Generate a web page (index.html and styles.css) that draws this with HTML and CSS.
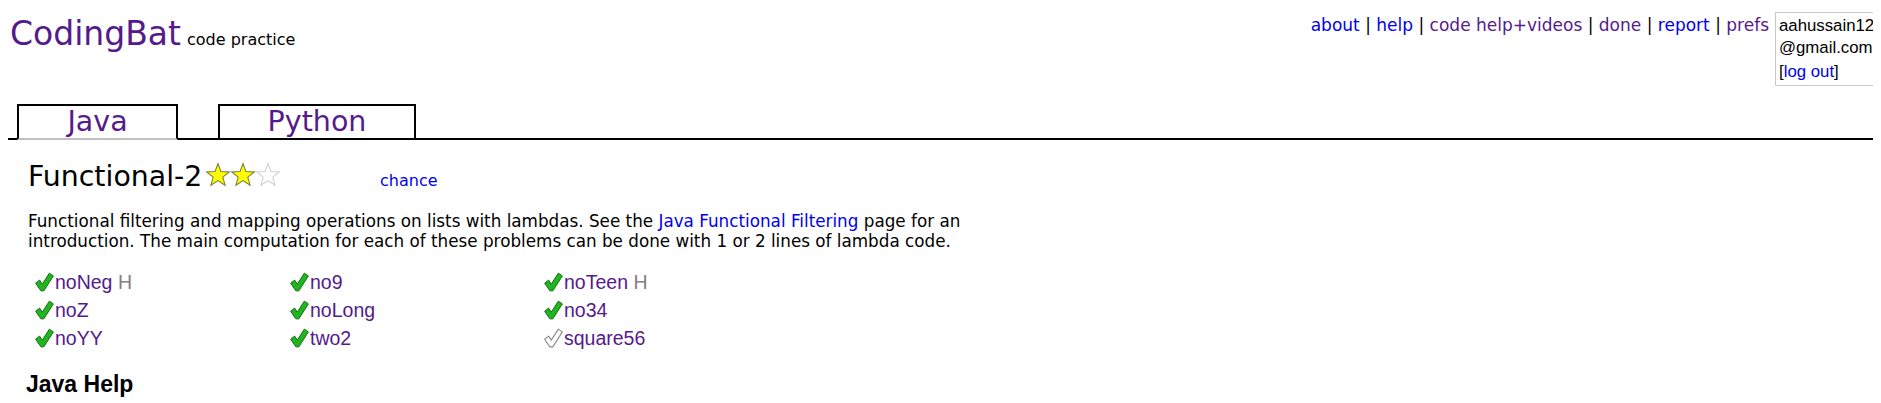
FILE: index.html
```html
<!DOCTYPE html>
<html>
<head>
<meta charset="utf-8">
<title>CodingBat Java Functional-2</title>
<link rel="stylesheet" href="styles.css">
</head>
<body>
<header class="top">
  <div class="brand">
    <a class="logo" href="#">CodingBat</a>
    <span class="tagline">code practice</span>
  </div>
  <div class="account">
    <nav class="nav">
      <a href="#" class="link">about</a> | <a href="#" class="link">help</a> | <a href="#" class="visited">code help+videos</a> | <a href="#" class="visited">done</a> | <a href="#" class="link">report</a> | <a href="#" class="visited">prefs</a>
    </nav>
    <div class="user">
      <div>aahussain12</div>
      <div>@gmail.com</div>
      <div class="logout">[<a href="#" class="link">log out</a>]</div>
    </div>
  </div>
</header>

<div class="tabs">
  <a href="#" class="tab active">Java</a>
  <a href="#" class="tab">Python</a>
</div>

<main class="content">
  <div class="title-row">
    <div class="title">
      <h1>Functional-2</h1>
      <svg class="stars" width="76" height="25" viewBox="0 0 72 24">
        <polygon class="star-on" points="12,1.5 14.8,9.1 22.9,9.5 16.6,14.5 18.8,22.3 12,17.8 5.2,22.3 7.4,14.5 1.1,9.5 9.2,9.1"/>
        <polygon class="star-on" transform="translate(24 0)" points="12,1.5 14.8,9.1 22.9,9.5 16.6,14.5 18.8,22.3 12,17.8 5.2,22.3 7.4,14.5 1.1,9.5 9.2,9.1"/>
        <polygon class="star-off" transform="translate(48 0)" points="12,1.5 14.8,9.1 22.9,9.5 16.6,14.5 18.8,22.3 12,17.8 5.2,22.3 7.4,14.5 1.1,9.5 9.2,9.1"/>
      </svg>
    </div>
    <a href="#" class="link chance">chance</a>
  </div>

  <p class="intro"><span>Functional filtering and mapping operations on lists with lambdas. See the </span><a href="#" class="link">Java Functional Filtering</a><span> page for an</span> <span>introduction. The main computation for each of these problems can be done with 1 or 2 lines of lambda code.</span></p>

  <div class="problems">
    <div class="prob"><svg class="check done" width="19" height="20" viewBox="0 0 18 18"><path d="M0.6 10.2 L4.4 7.2 L6.9 11 L13.6 0.6 L17.4 3.2 L8.4 17.4 L5.6 17.4 Z"/></svg><span class="name"><a href="#" class="visited">noNeg</a> <span class="hint">H</span></span></div>
    <div class="prob"><svg class="check done" width="19" height="20" viewBox="0 0 18 18"><path d="M0.6 10.2 L4.4 7.2 L6.9 11 L13.6 0.6 L17.4 3.2 L8.4 17.4 L5.6 17.4 Z"/></svg><span class="name"><a href="#" class="visited">no9</a></span></div>
    <div class="prob"><svg class="check done" width="19" height="20" viewBox="0 0 18 18"><path d="M0.6 10.2 L4.4 7.2 L6.9 11 L13.6 0.6 L17.4 3.2 L8.4 17.4 L5.6 17.4 Z"/></svg><span class="name"><a href="#" class="visited">noTeen</a> <span class="hint">H</span></span></div>
    <div class="prob"><svg class="check done" width="19" height="20" viewBox="0 0 18 18"><path d="M0.6 10.2 L4.4 7.2 L6.9 11 L13.6 0.6 L17.4 3.2 L8.4 17.4 L5.6 17.4 Z"/></svg><span class="name"><a href="#" class="visited">noZ</a></span></div>
    <div class="prob"><svg class="check done" width="19" height="20" viewBox="0 0 18 18"><path d="M0.6 10.2 L4.4 7.2 L6.9 11 L13.6 0.6 L17.4 3.2 L8.4 17.4 L5.6 17.4 Z"/></svg><span class="name"><a href="#" class="visited">noLong</a></span></div>
    <div class="prob"><svg class="check done" width="19" height="20" viewBox="0 0 18 18"><path d="M0.6 10.2 L4.4 7.2 L6.9 11 L13.6 0.6 L17.4 3.2 L8.4 17.4 L5.6 17.4 Z"/></svg><span class="name"><a href="#" class="visited">no34</a></span></div>
    <div class="prob"><svg class="check done" width="19" height="20" viewBox="0 0 18 18"><path d="M0.6 10.2 L4.4 7.2 L6.9 11 L13.6 0.6 L17.4 3.2 L8.4 17.4 L5.6 17.4 Z"/></svg><span class="name"><a href="#" class="visited">noYY</a></span></div>
    <div class="prob"><svg class="check done" width="19" height="20" viewBox="0 0 18 18"><path d="M0.6 10.2 L4.4 7.2 L6.9 11 L13.6 0.6 L17.4 3.2 L8.4 17.4 L5.6 17.4 Z"/></svg><span class="name"><a href="#" class="visited">two2</a></span></div>
    <div class="prob"><svg class="check todo" width="19" height="20" viewBox="0 0 18 18"><path d="M0.6 10.2 L4.4 7.2 L6.9 11 L13.6 0.6 L17.4 3.2 L8.4 17.4 L5.6 17.4 Z"/></svg><span class="name"><a href="#" class="visited">square56</a></span></div>
  </div>

  <h2 class="help">Java Help</h2>
</main>
</body>
</html>
```

FILE: styles.css
```css
html, body {
  overflow: hidden;
}
body {
  margin: 8px;
  background: #fff;
  color: #000;
  font-family: "DejaVu Sans", Verdana, sans-serif;
}
a {
  text-decoration: none;
}
.link {
  color: #0000ee;
}
.visited {
  color: #551a8b;
}

.top {
  display: flex;
  justify-content: space-between;
  align-items: flex-start;
  margin-right: -40px;
}
.brand {
  padding-left: 2px;
  padding-top: 6px;
  display: flex;
  align-items: baseline;
  gap: 6px;
}
.logo {
  color: #551a8b;
  font-size: 33px;
}
.tagline {
  font-size: 16px;
}
.account {
  display: flex;
  align-items: flex-start;
  gap: 6px;
}
.nav {
  font-size: 17px;
  padding-top: 7px;
  white-space: nowrap;
}
.user {
  margin-top: 4px;
  width: 131px;
  border: 1px solid #c8c8c8;
  padding: 2px 2px 2px 3px;
  font-family: "Liberation Sans", Arial, sans-serif;
  font-size: 16.8px;
  line-height: 22px;
  white-space: nowrap;
}
.logout {
  margin-top: 2px;
}

.tabs {
  display: flex;
  gap: 40px;
  margin-top: 18px;
  padding-left: 9px;
  border-bottom: 2px solid #000;
}
.tab {
  display: block;
  height: 32px;
  line-height: 32px;
  text-align: center;
  font-size: 28.5px;
  color: #551a8b;
  background: #fff;
  border: 2px solid #000;
  margin-bottom: -2px;
}
.tab:nth-child(1) {
  width: 157px;
}
.tab:nth-child(2) {
  width: 194px;
}
.tab.active {
  border-bottom-color: #c0c0c0;
}

.content {
  padding: 20px 0 0 20px;
}
.title-row {
  display: grid;
  grid-template-columns: 352px auto;
  align-items: baseline;
}
.title {
  display: flex;
  align-items: baseline;
  gap: 3px;
}
h1 {
  margin: 0;
  font-size: 28.4px;
  font-weight: normal;
}
.stars {
  display: block;
  align-self: flex-end;
  margin-bottom: 6px;
}
.star-on {
  fill: #ffff00;
  stroke: #7a7a3a;
  stroke-width: 1;
}
.star-off {
  fill: #fff;
  stroke: #cfcfcf;
  stroke-width: 1;
}
.chance {
  font-size: 16px;
}
.intro {
  margin: 18px 0 0 0;
  max-width: 960px;
  font-size: 16.8px;
  line-height: 20px;
}

.problems {
  display: grid;
  grid-template-columns: 255px 254px 256px;
  width: max-content;
  margin: 17px 0 0 7px;
}
.prob {
  display: flex;
  align-items: baseline;
  font-family: "Liberation Sans", Arial, sans-serif;
  font-size: 19.5px;
  line-height: 28px;
}
.name {
  white-space: nowrap;
}
.check {
  align-self: center;
  margin-right: 1px;
  flex-shrink: 0;
}
.check.done path {
  fill: #22b422;
  stroke: #0b6b0b;
  stroke-width: 0.9;
  stroke-linejoin: round;
}
.check.todo path {
  fill: #fff;
  stroke: #8a8a8a;
  stroke-width: 1;
  stroke-linejoin: round;
}
.hint {
  color: #808080;
}
.help {
  margin: 19px 0 0 -2px;
  font-family: "Liberation Sans", Arial, sans-serif;
  font-size: 23px;
  font-weight: bold;
}
```
